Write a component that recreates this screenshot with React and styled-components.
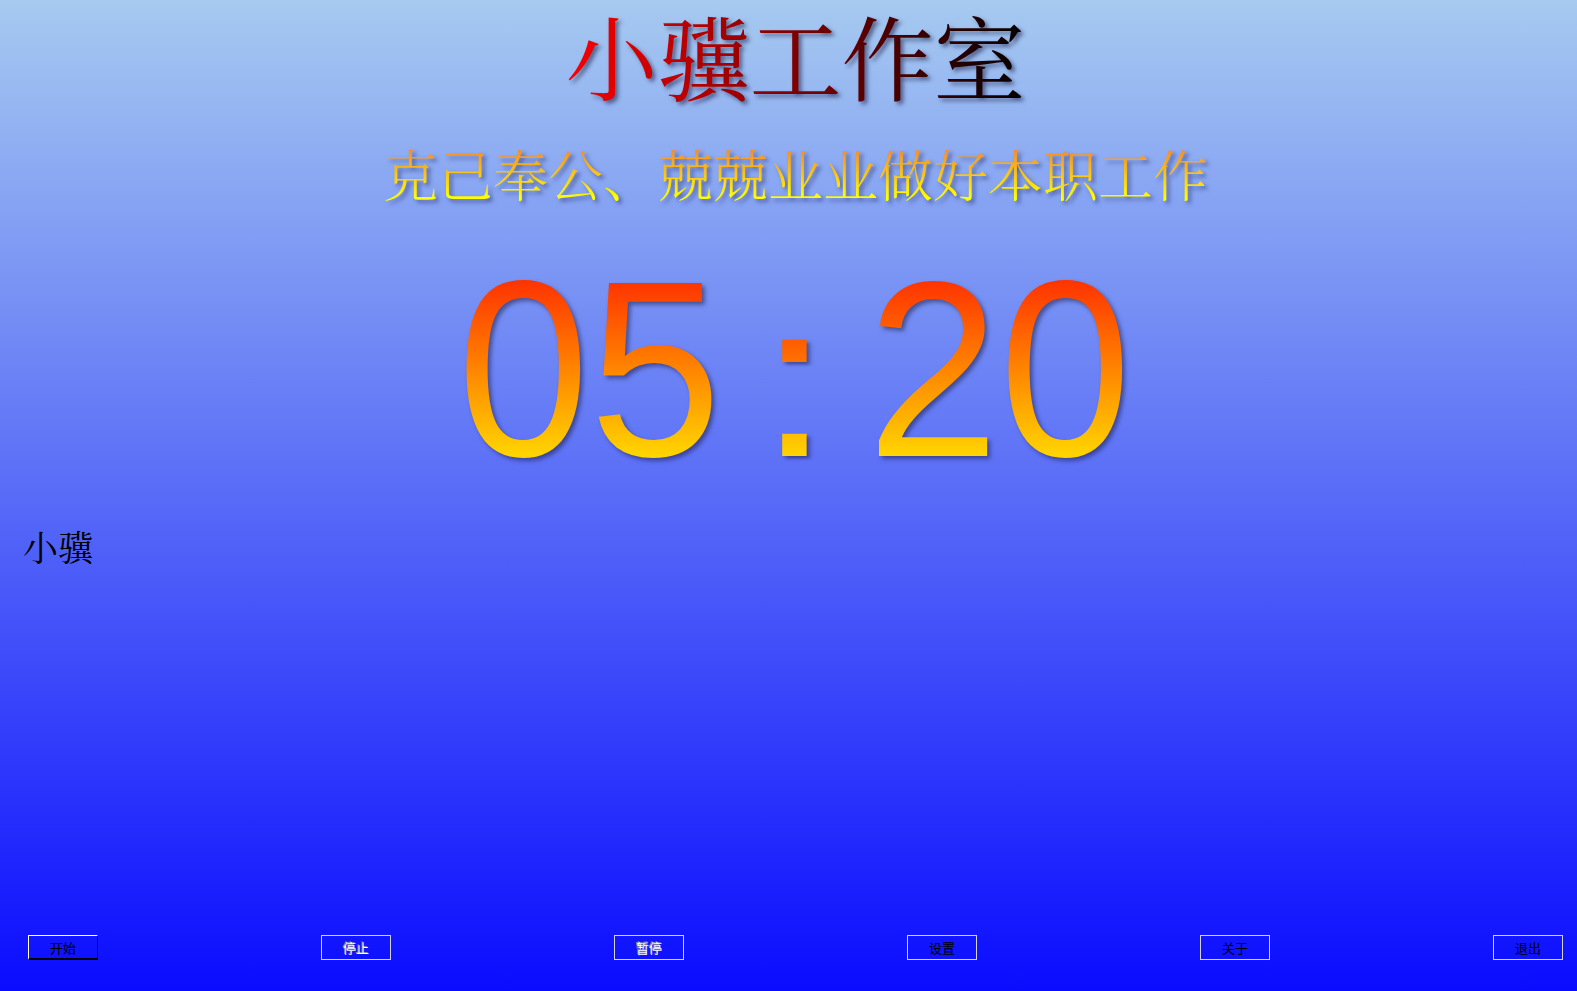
import styled, { createGlobalStyle } from 'styled-components';

const GlobalStyle = createGlobalStyle`
  html, body {
    margin: 0;
    padding: 0;
    height: 100%;
  }
  body {
    font-family: 'Liberation Sans', 'Noto Sans CJK SC', sans-serif;
  }
  #root {
    height: 100%;
  }
`;

const buttons = [
  { label: '开始', isDefault: true },
  { label: '停止', disabled: true },
  { label: '暂停', disabled: true },
  { label: '设置' },
  { label: '关于' },
  { label: '退出' },
];

const App = () => {
  return (
    <Page>
      <GlobalStyle />
      <Header>
        <Title>小骥工作室</Title>
        <Motto>克己奉公、兢兢业业做好本职工作</Motto>
      </Header>

      <Clock>
        <Digits>05</Digits>
        <Digits $colon>:</Digits>
        <Digits>20</Digits>
      </Clock>

      <Owner>小骥</Owner>

      <ButtonBar>
        {buttons.map((item) => (
          <Button
            key={item.label}
            $isDefault={item.isDefault}
            $disabled={item.disabled}
          >
            {item.label}
          </Button>
        ))}
      </ButtonBar>
    </Page>
  );
};

const Page = styled.div`
  box-sizing: border-box;
  height: 100vh;
  min-height: 991px;
  display: flex;
  flex-direction: column;
  background: linear-gradient(to bottom, #a6caf0 0%, #0a0cff 100%);
  overflow: hidden;
`;

const Header = styled.header`
  display: flex;
  flex-direction: column;
  align-items: center;
  padding-left: 14px;
`;

const Title = styled.h1`
  display: inline-block;
  margin: 2px 0 0;
  padding: 0 6px;
  font-family: 'Noto Serif CJK SC', 'Noto Sans CJK SC', serif;
  font-size: 92px;
  font-weight: 400;
  line-height: 1.15;
  background: linear-gradient(to right, #ff0000 0%, #8a0000 45%, #000000 100%);
  -webkit-background-clip: text;
  background-clip: text;
  color: transparent;
  filter: drop-shadow(3px 3px 2px rgba(20, 20, 60, 0.55));
`;

const Motto = styled.h2`
  display: inline-block;
  margin: 35px 0 0;
  padding: 0 4px;
  font-family: 'Noto Serif CJK SC', 'Noto Sans CJK SC', serif;
  font-size: 55px;
  font-weight: 300;
  line-height: 1.1;
  background: linear-gradient(to bottom, #f58a2a 10%, #ffff00 92%);
  -webkit-background-clip: text;
  background-clip: text;
  color: transparent;
  filter: drop-shadow(3px 3px 2px rgba(20, 20, 80, 0.5));
`;

const Clock = styled.div`
  display: flex;
  justify-content: center;
  gap: 42px;
  margin-top: 42px;
  padding-left: 12px;
  transform: scaleX(0.95);
`;

const Digits = styled.span`
  display: inline-block;
  font-family: 'Liberation Sans', Arial, sans-serif;
  font-size: 250px;
  line-height: 1;
  background: linear-gradient(to bottom, #ff2e00 12%, #ff7a00 45%, #ffd400 84%);
  -webkit-background-clip: text;
  background-clip: text;
  color: transparent;
  filter: drop-shadow(3px 3px 2px rgba(20, 20, 60, 0.5));
  transform: ${({ $colon }) => ($colon ? 'scale(1.08, 0.88)' : 'none')};
  transform-origin: 50% 84%;
`;

const Owner = styled.div`
  margin: 34px 0 0 23px;
  font-family: 'Noto Serif CJK SC', 'Noto Sans CJK SC', serif;
  font-size: 35px;
  line-height: 1;
  color: #000;
`;

const ButtonBar = styled.div`
  margin-top: auto;
  display: flex;
  justify-content: space-between;
  padding: 0 14px 31px 28px;
`;

const Button = styled.button`
  box-sizing: border-box;
  width: 70px;
  height: 25px;
  padding: 0;
  background: transparent;
  border: 1px solid #d4d4d4;
  border-color: ${({ $isDefault }) =>
    $isDefault ? '#ffffff #000000 #000000 #ffffff' : '#d4d4d4'};
  border-bottom-width: ${({ $isDefault }) => ($isDefault ? '2px' : '1px')};
  font-family: 'Noto Sans CJK SC', sans-serif;
  font-size: 13px;
  font-weight: 400;
  line-height: 1;
  color: ${({ $disabled }) => ($disabled ? '#ffffff' : '#000000')};
  text-shadow: ${({ $disabled }) =>
    $disabled ? '-1px -1px 0 #8a8a8a' : 'none'};
  cursor: pointer;
`;

export default App;
